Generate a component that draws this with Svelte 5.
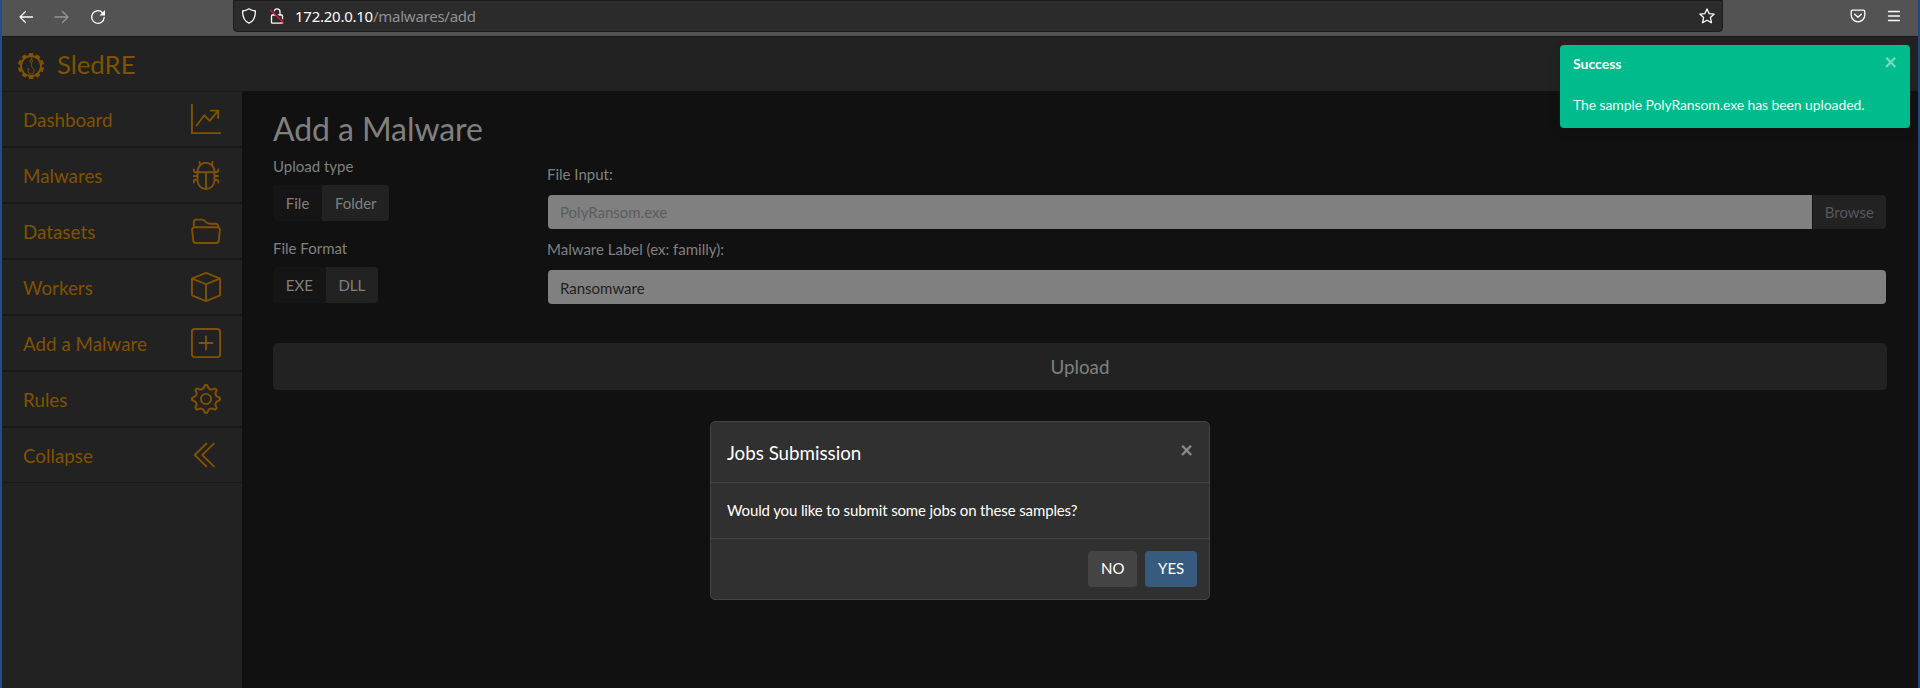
<script>
  const items = [
    { label: 'Dashboard', icon: 'graph' },
    { label: 'Malwares', icon: 'bug' },
    { label: 'Datasets', icon: 'folder' },
    { label: 'Workers', icon: 'box' },
    { label: 'Add a Malware', icon: 'plus' },
    { label: 'Rules', icon: 'gear' },
    { label: 'Collapse', icon: 'chevrons' }
  ];
  const paths = {
    graph: 'M0 0h1v15h15v1H0V0Zm10 3.5a.5.5 0 0 1 .5-.5h4a.5.5 0 0 1 .5.5v4a.5.5 0 0 1-1 0V4.9l-3.613 4.417a.5.5 0 0 1-.74.037L7.06 6.767l-3.656 5.027a.5.5 0 0 1-.808-.588l4-5.5a.5.5 0 0 1 .758-.06l2.609 2.61L13.445 4H10.5a.5.5 0 0 1-.5-.5Z',
    bug: 'M4.355.522a.5.5 0 0 1 .623.333l.291.956A4.979 4.979 0 0 1 8 1c1.007 0 1.946.298 2.731.811l.29-.956a.5.5 0 1 1 .957.29l-.41 1.352A4.985 4.985 0 0 1 13 6h.5a.5.5 0 0 0 .5-.5V5a.5.5 0 0 1 1 0v.5A1.5 1.5 0 0 1 13.5 7H13v1h1.5a.5.5 0 0 1 0 1H13v1h.5a1.5 1.5 0 0 1 1.5 1.5v.5a.5.5 0 1 1-1 0v-.5a.5.5 0 0 0-.5-.5H13a5 5 0 0 1-10 0h-.5a.5.5 0 0 0-.5.5v.5a.5.5 0 1 1-1 0v-.5A1.5 1.5 0 0 1 2.5 10H3V9H1.500a.5.5 0 0 1 0-1H3V7h-.5A1.500 1.500 0 0 1 1 5.500V5a.5.5 0 0 1 1 0v.5a.5.5 0 0 0 .5.5H3c0-1.364.547-2.601 1.432-3.503l-.41-1.352a.5.5 0 0 1 .333-.623zM4 7v4a4 4 0 0 0 3.500 3.970V7H4zm4.500 0v7.970A4 4 0 0 0 12 11V7H8.500zM12 6a3.989 3.989 0 0 0-1.334-2.982A3.983 3.983 0 0 0 8 2a3.983 3.983 0 0 0-2.667 1.018A3.989 3.989 0 0 0 4 6h8z',
    box: 'M8.186 1.113a.5.5 0 0 0-.372 0L1.846 3.500 8 5.961 14.154 3.500 8.186 1.113zM15 4.239l-6.500 2.600v7.922l6.500-2.600V4.240zM7.500 14.762V6.838L1 4.239v7.923l6.500 2.600zM7.443.184a1.500 1.500 0 0 1 1.114 0l7.129 2.852A.5.5 0 0 1 16 3.500v8.662a1 1 0 0 1-.629.928l-7.185 2.874a.5.5 0 0 1-.372 0L.630 13.090a1 1 0 0 1-.630-.928V3.500a.5.5 0 0 1 .314-.464L7.443.184z',
    plus: 'M14 1a1 1 0 0 1 1 1v12a1 1 0 0 1-1 1H2a1 1 0 0 1-1-1V2a1 1 0 0 1 1-1h12zM2 0a2 2 0 0 0-2 2v12a2 2 0 0 0 2 2h12a2 2 0 0 0 2-2V2a2 2 0 0 0-2-2H2z M8 4a.5.5 0 0 1 .5.5v3h3a.5.5 0 0 1 0 1h-3v3a.5.5 0 0 1-1 0v-3h-3a.5.5 0 0 1 0-1h3v-3A.5.5 0 0 1 8 4z'
  };
  const gearTeeth = Array.from({ length: 10 }, (_, i) => i * 36);
  let uploadType = $state('File');
  let fileFormat = $state('EXE');
  let label = $state('Ransomware');
</script>

<div class="window">
  <div class="toolbar">
    <div class="navs">
      <svg width="16" height="16" viewBox="0 0 16 16" class="ln"><path d="M14.500 8H2M7.500 2.500 2 8l5.500 5.500" /></svg>
      <svg width="16" height="16" viewBox="0 0 16 16" class="ln dim"><path d="M1 8h13M8.500 2.500 14 8l-5.500 5.500" /></svg>
      <svg width="16" height="16" viewBox="0 0 16 16" class="ln"><path d="M14.200 8.500A6.300 6.300 0 1 1 12.500 3.700" /><path d="M15 1v5.500H9.500z" fill="#fbfbfe" stroke="none" /></svg>
    </div>
    <div class="address">
      <svg width="16" height="16" viewBox="0 0 16 16" class="ln"><path d="M8 .8c2 1.400 4 2 6.400 2.200C14.600 9 12.500 13.200 8 15.200 3.500 13.200 1.400 9 1.600 3 4 2.800 6 2.200 8 .8z" /></svg>
      <svg width="16" height="16" viewBox="0 0 16 16" class="ln lock"><path d="M5 7V3.800a3 3 0 0 1 6 0V7M3.400 7h9.200c.6 0 .9.300.9.900v6.300c0 .6-.3.900-.9.900H3.400c-.6 0-.9-.3-.9-.9V7.900c0-.6.300-.9.900-.9z" /><path d="m2.500 1.500 13 12.500" stroke="#2b2b2b" /><path d="m1.500 2.200 13 12.500" stroke="#e2103f" stroke-width="1.400" /></svg>
      <span class="url">172.20.0.10<i>/malwares/add</i></span>
      <svg width="16" height="16" viewBox="0 0 16 16" class="ln star"><path d="m8 .9 2.100 4.700 5.100.500-3.800 3.500 1.100 5.200L8 12.200l-4.500 2.600 1.100-5.200L.8 6.100l5.100-.5z" /></svg>
    </div>
    <div class="tools">
      <svg width="16" height="16" viewBox="0 0 16 16" class="ln"><path d="M2.600 2.100h10.800c.9 0 1.400.5 1.400 1.400V7a6.800 6.800 0 0 1-13.600 0V3.500c0-.9.500-1.400 1.400-1.400zM4.700 6.300 8 9.300l3.300-3" /></svg>
      <svg width="16" height="16" viewBox="0 0 16 16" class="ln"><path d="M2.500 3.500h11M2.500 8h11M2.500 12.500h11" /></svg>
    </div>
  </div>

  <header>
    <svg class="logo" width="28" height="28" viewBox="0 0 28 28">
      <circle cx="14" cy="14" r="10" fill="none" stroke="#805200" stroke-width="1.900" />
      {#each gearTeeth as angle}
        <path d="M11.500 4 12 1h4l.5 3z" fill="#805200" transform="rotate({angle} 14 14)" />
      {/each}
      <path d="M14.300 5v2.500M14.300 10.700v2.800c0 2 2.900 3.400 2.900 5.300a3.100 3.100 0 0 1-6.200 0v-2.600l1.500 1.700" fill="none" stroke="#805200" stroke-width=".9" />
      <circle cx="14.300" cy="9.200" r="1.300" fill="none" stroke="#805200" stroke-width="1" />
    </svg>
    <span>SledRE</span>
  </header>

  <div class="body">
    <nav>
      {#each items as item}
        <div class="item">
          <span>{item.label}</span>
          <svg width="30" height="30" viewBox="0 0 16 16">
            {#if paths[item.icon]}
              <path d={paths[item.icon]} fill="currentColor" fill-rule="evenodd" />
            {:else if item.icon === 'folder'}
              <path d="M1.500 5V3A1.400 1.400 0 0 1 2.900 1.900h3c1.500 0 2 2.200 4 2.200h3.200A1.400 1.400 0 0 1 14.500 5.500V6M2 6h12a1.300 1.300 0 0 1 1.400 1.500l-.6 5.500a1.500 1.500 0 0 1-1.500 1.400H2.700A1.500 1.500 0 0 1 1.200 13L.6 7.500A1.300 1.300 0 0 1 2 6z" class="out" />
            {:else if item.icon === 'gear'}
              <circle cx="8" cy="8" r="2.750" class="out" />
              <path transform="translate(8 8) scale(1.070) translate(-8 -8)" d="M8.837 1.626c-.246-.835-1.428-.835-1.674 0l-.094.319A1.873 1.873 0 0 1 4.377 3.060l-.292-.160c-.764-.415-1.600.420-1.184 1.185l.159.292a1.873 1.873 0 0 1-1.115 2.692l-.319.094c-.835.246-.835 1.428 0 1.674l.319.094a1.873 1.873 0 0 1 1.115 2.693l-.160.291c-.415.764.420 1.600 1.185 1.184l.292-.159a1.873 1.873 0 0 1 2.692 1.116l.094.318c.246.835 1.428.835 1.674 0l.094-.319a1.873 1.873 0 0 1 2.693-1.115l.291.160c.764.415 1.600-.420 1.184-1.185l-.159-.291a1.873 1.873 0 0 1 1.116-2.693l.318-.094c.835-.246.835-1.428 0-1.674l-.319-.094a1.873 1.873 0 0 1-1.115-2.692l.160-.292c.415-.764-.420-1.600-1.185-1.184l-.291.159A1.873 1.873 0 0 1 8.930 1.945l-.094-.319z" class="out" />
            {:else}
              <path d="m8.200 1.900L2 8l6.200 6.100M12.200 1.900 6 8l6.200 6.100" class="out" />
            {/if}
          </svg>
        </div>
      {/each}
    </nav>

    <main>
      <h1>Add a Malware</h1>
      <div class="form">
        <div class="choices">
          <div class="caption">Upload type</div>
          <div class="group">
            {#each ['File', 'Folder'] as option}
              <button class:active={uploadType === option} onclick={() => (uploadType = option)}>{option}</button>
            {/each}
          </div>
          <div class="caption second">File Format</div>
          <div class="group">
            {#each ['EXE', 'DLL'] as option}
              <button class:active={fileFormat === option} onclick={() => (fileFormat = option)}>{option}</button>
            {/each}
          </div>
        </div>
        <div class="fields">
          <div class="caption">File Input:</div>
          <div class="file"><span class="name">PolyRansom.exe</span><span class="browse">Browse</span></div>
          <div class="caption">Malware Label (ex: familly):</div>
          <input bind:value={label} />
        </div>
      </div>
      <button class="upload">Upload</button>
    </main>
  </div>

  <section class="modal">
    <div class="mhead"><h5>Jobs Submission</h5><span class="close">×</span></div>
    <div class="mbody">Would you like to submit some jobs on these samples?</div>
    <div class="mfoot"><button>NO</button><button class="yes">YES</button></div>
  </section>

  <aside class="toast">
    <div class="thead"><strong>Success</strong><span class="close">×</span></div>
    <div class="message">The sample PolyRansom.exe has been uploaded.</div>
  </aside>
</div>

<style>
  :global(body) { margin: 0; background: #111; }
  * { box-sizing: border-box; }
  .window {
    position: relative; width: 1920px; height: 688px; overflow: hidden;
    display: flex; flex-direction: column; background: #111; color: #808080;
    border-left: 2px solid #294a87; border-right: 2px solid #204788;
    font: 15px/22.5px Lato, sans-serif;
  }
  button, input { font: inherit; }
  .toolbar { height: 36px; flex: none; display: flex; background: #535353; }
  .ln { fill: none; stroke: #fbfbfe; stroke-width: 1.300; stroke-linecap: round; stroke-linejoin: round; flex: none; }
  .dim { opacity: .4; }
  .navs { width: 231px; padding: 9px 0 0 16px; display: flex; gap: 20px; }
  .address {
    width: 1490px; height: 32px; display: flex; align-items: center; padding: 0 7px;
    background: #2b2b2b; border: 1px solid #1c1c1c; border-radius: 0 0 4px 4px;
  }
  .lock { margin-left: 12px; }
  .url { flex: 1; margin-left: 10px; color: #fbfbfe; font: 15px/22px "Noto Sans", sans-serif; letter-spacing: -.25px; }
  .url i { font-style: normal; color: #929292; }
  .tools { flex: 1; display: flex; justify-content: flex-end; gap: 20px; padding: 8px 16px 0 0; }
  header {
    height: 55px; flex: none; display: flex; align-items: center; padding-left: 15px;
    background: #222; color: #805200; border-top: 1px solid #191919; font-size: 25.7px;
  }
  .logo { margin-top: 4px; }
  header span { margin-left: 12px; }
  .body { flex: 1; display: flex; }
  nav { width: 240px; background: #222; }
  .item {
    height: 56px; display: flex; align-items: center; justify-content: space-between;
    padding: 0 21px; border-bottom: 2px solid #191919; color: #805200; font-size: 18.75px;
  }
  .item span { padding-top: 3px; letter-spacing: .03px; }
  .item:first-child { height: 57px; border-top: 1px solid #191919; }
  .item:last-child { height: 55px; border-bottom-width: 1px; }
  .out { fill: none; stroke: currentColor; stroke-width: 1; stroke-linecap: round; stroke-linejoin: round; }
  main { flex: 1; padding: 19px 31px 0; }
  h1 { margin: 0; font-size: 32px; line-height: 38px; font-weight: 400; letter-spacing: -.08px; }
  .form { display: flex; margin: 7px 1px 0 0; }
  .choices { width: 274px; }
  .group { display: flex; width: max-content; margin-top: 7px; border-radius: 4px; overflow: hidden; }
  .group button { height: 36px; border: 0; padding: 1px 12.8px 0; background: #222; color: #808080; }
  .group .active { background: #151515; }
  .second { margin-top: 16px; }
  .second + .group { margin-top: 8px; }
  .fields { flex: 1; padding-top: 8px; }
  .file { display: flex; height: 34px; margin: 9px 0 9px 1px; }
  .name { flex: 1; background: #808080; color: #5a5d60; padding: 6px 12px; border-radius: 4px 0 0 4px; }
  .browse { background: #222; color: #55585c; padding: 6px 12px; margin-left: 1px; border-radius: 0 4px 4px 0; }
  input {
    display: block; width: calc(100% - 1px); height: 34px; margin: 10px 0 0 1px; padding: 1px 12px 0;
    border: 0; border-radius: 4px; background: #808080; color: #222;
  }
  .upload {
    display: block; width: 100%; height: 47px; margin-top: 39px; padding-top: 3px; border: 0;
    border-radius: 5px; background: #222; color: #808080; font-size: 18.75px;
  }
  .modal {
    position: absolute; left: 708px; top: 421px; width: 500px; height: 179px;
    background: #303030; border: 1px solid #444; border-radius: 5px; color: #fff;
  }
  .mhead { height: 61px; display: flex; justify-content: space-between; padding: 16px; border-bottom: 1px solid #444; }
  h5 { margin: 4px 0 0; font-size: 18.75px; line-height: 22.5px; font-weight: 400; }
  .mbody { height: 56px; padding: 16px; border-bottom: 1px solid #444; letter-spacing: -.13px; }
  .mfoot { display: flex; justify-content: flex-end; gap: 8px; padding: 12px; }
  .mfoot button { height: 36px; padding: 0 12.8px 1px; border: 0; border-radius: 4px; background: #444; color: #fff; }
  .mfoot .yes { background: #375a7f; }
  .close { font-size: 22.5px; line-height: 24px; font-weight: 700; color: #8c8c8c; }
  .toast {
    position: absolute; left: 1558px; top: 45px; width: 350px; height: 83px; padding: 8px 13px;
    background: #00bc8c; border-radius: 4px; color: #eefaf7; font-size: 14px; line-height: 21px;
    box-shadow: 0 4px 12px rgba(0,0,0,.1);
  }
  .thead { display: flex; justify-content: space-between; height: 41px; color: #fff; }
  .message { letter-spacing: -.1px; }
  .toast .close { color: #78d9c1; line-height: 17px; }
</style>
